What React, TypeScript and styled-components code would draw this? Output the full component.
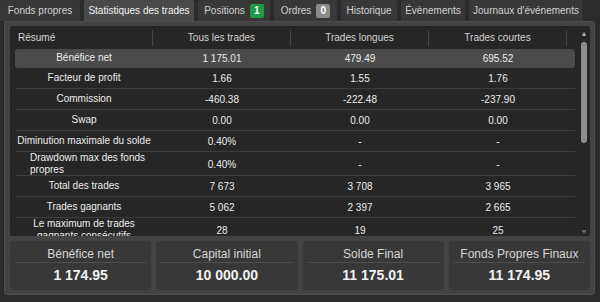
import React from "react";
import styled, { createGlobalStyle } from "styled-components";

const Global = createGlobalStyle`
  html, body { margin: 0; padding: 0; background: #2b2b2b; }
  body { font-family: "Liberation Sans", Arial, sans-serif; }
`;

const Root = styled.div`
  width: 600px;
  height: 302px;
  background: #2b2b2b;
  color: #e6e6e6;
  font-family: "Liberation Sans", Arial, sans-serif;
  overflow: hidden;
`;

const TabBar = styled.div`
  display: flex;
  gap: 4px;
  height: 21px;
`;

const Tab = styled.div<{ $w: number; $active?: boolean }>`
  width: ${(p) => p.$w}px;
  height: 21px;
  box-sizing: border-box;
  display: flex;
  align-items: center;
  justify-content: center;
  gap: 5px;
  font-size: 10px;
  color: ${(p) => (p.$active ? "#f0f0f0" : "#d0d0d0")};
  background: ${(p) => (p.$active ? "#4a4a4a" : "#383838")};
  border-radius: 2px 2px 0 0;
  white-space: nowrap;
`;

const Badge = styled.span<{ $green?: boolean }>`
  display: inline-flex;
  align-items: center;
  justify-content: center;
  width: 14px;
  height: 14px;
  border-radius: 2px;
  font-size: 10px;
  font-weight: bold;
  color: #fff;
  background: ${(p) => (p.$green ? "#1f9a45" : "#8a8a8a")};
`;

const Panel = styled.div`
  margin: 0 5px 0 4px;
  height: 274px;
  box-sizing: border-box;
  background: #434343;
  border: 1px solid #4d4d4d;
  border-radius: 0 3px 3px 3px;
  padding: 4px 4px 4px 5px;
  display: flex;
  flex-direction: column;
  gap: 5px;
`;

const TableArea = styled.div`
  height: 210px;
  background: #262626;
  border-radius: 2px;
  display: flex;
  padding-left: 5px;
  overflow: hidden;
`;

const TableMain = styled.div`
  width: 560px;
  display: flex;
  flex-direction: column;
`;

const HeaderRow = styled.div`
  display: grid;
  grid-template-columns: 138px 138px 138px 138px 8px;
  height: 23px;
  align-items: center;
  font-size: 10px;
  color: #d2d2d2;
`;

const HeadCell = styled.div<{ $left?: boolean }>`
  height: 16px;
  display: flex;
  align-items: center;
  justify-content: ${(p) => (p.$left ? "flex-start" : "center")};
  padding-left: ${(p) => (p.$left ? "3px" : "0")};
  border-right: 1px solid #454545;
`;

const Body = styled.div`
  flex: 1;
  overflow: hidden;
`;

const Row = styled.div<{ $hl?: boolean; $tall?: boolean }>`
  display: grid;
  grid-template-columns: 138px 138px 138px 138px 8px;
  align-items: center;
  height: ${(p) => (p.$hl ? 18 : p.$tall ? 23 : 20)}px;
  font-size: 10px;
  color: #ececec;
  background: ${(p) => (p.$hl ? "#4b4b4b" : "transparent")};
  border-radius: ${(p) => (p.$hl ? "3px" : "0")};
  border-bottom: 1px solid ${(p) => (p.$hl ? "transparent" : "#3d3d3d")};
`;

const LabelCell = styled.div<{ $left?: boolean }>`
  text-align: ${(p) => (p.$left ? "left" : "center")};
  padding: ${(p) => (p.$left ? "0 4px 0 15px" : "0 2px")};
  line-height: 12px;
`;

const ValueCell = styled.div`
  text-align: center;
`;

const ScrollBar = styled.div`
  width: 14px;
  margin-left: 3px;
  display: flex;
  flex-direction: column;
  align-items: center;
  padding-top: 4px;
  box-sizing: border-box;
`;

const Arrow = styled.div<{ $dark?: boolean }>`
  font-size: 7px;
  line-height: 8px;
  height: 8px;
  color: ${(p) => (p.$dark ? "#6f6f6f" : "#b5b5b5")};
`;

const Thumb = styled.div`
  width: 6px;
  height: 101px;
  margin-top: 4px;
  background: #8e8e8e;
  border-radius: 3px;
`;

const Spacer = styled.div`
  flex: 1;
`;

const CardRow = styled.div`
  display: flex;
  gap: 5px;
  height: 49px;
`;

const Card = styled.div`
  flex: 1;
  background: #383838;
  border-radius: 3px;
  display: flex;
  flex-direction: column;
  align-items: stretch;
  padding: 0 5px;
`;

const CardLabel = styled.div`
  height: 20px;
  display: flex;
  align-items: flex-end;
  justify-content: center;
  font-size: 12px;
  color: #d6d6d6;
  border-bottom: 1px solid #4e4e4e;
  padding-bottom: 1px;
`;

const CardValue = styled.div`
  flex: 1;
  display: flex;
  align-items: center;
  justify-content: center;
  font-size: 14px;
  font-weight: bold;
  color: #f2f2f2;
  padding-bottom: 3px;
`;

const rows: { label: string; v: [string, string, string]; hl?: boolean; tall?: boolean; left?: boolean }[] = [
  { label: "Bénéfice net", v: ["1 175.01", "479.49", "695.52"], hl: true },
  { label: "Facteur de profit", v: ["1.66", "1.55", "1.76"] },
  { label: "Commission", v: ["-460.38", "-222.48", "-237.90"] },
  { label: "Swap", v: ["0.00", "0.00", "0.00"] },
  { label: "Diminution maximale du solde", v: ["0.40%", "-", "-"] },
  { label: "Drawdown max des fonds propres", v: ["0.40%", "-", "-"], tall: true, left: true },
  { label: "Total des trades", v: ["7 673", "3 708", "3 965"] },
  { label: "Trades gagnants", v: ["5 062", "2 397", "2 665"] },
  { label: "Le maximum de trades gagnants consécutifs", v: ["28", "19", "25"], tall: true },
];

const cards = [
  ["Bénéfice net", "1 174.95"],
  ["Capital initial", "10 000.00"],
  ["Solde Final", "11 175.01"],
  ["Fonds Propres Finaux", "11 174.95"],
];

export default function App() {
  return (
    <Root>
      <Global />
      <TabBar>
        <Tab $w={80}>Fonds propres</Tab>
        <Tab $w={110} $active>Statistiques des trades</Tab>
        <Tab $w={72}>
          Positions <Badge $green>1</Badge>
        </Tab>
        <Tab $w={63}>
          Ordres <Badge>0</Badge>
        </Tab>
        <Tab $w={56}>Historique</Tab>
        <Tab $w={64}>Évènements</Tab>
        <Tab $w={114}>Journaux d'événements</Tab>
      </TabBar>
      <Panel>
        <TableArea>
          <TableMain>
            <HeaderRow>
              <HeadCell $left>Résumé</HeadCell>
              <HeadCell>Tous les trades</HeadCell>
              <HeadCell>Trades longues</HeadCell>
              <HeadCell>Trades courtes</HeadCell>
            </HeaderRow>
            <Body>
              {rows.map((r) => (
                <Row key={r.label} $hl={r.hl} $tall={r.tall}>
                  <LabelCell $left={r.left}>{r.label}</LabelCell>
                  <ValueCell>{r.v[0]}</ValueCell>
                  <ValueCell>{r.v[1]}</ValueCell>
                  <ValueCell>{r.v[2]}</ValueCell>
                </Row>
              ))}
            </Body>
          </TableMain>
          <ScrollBar>
            <Arrow>▲</Arrow>
            <Thumb />
            <Spacer />
            <Arrow $dark>▼</Arrow>
          </ScrollBar>
        </TableArea>
        <CardRow>
          {cards.map(([l, v]) => (
            <Card key={l}>
              <CardLabel>{l}</CardLabel>
              <CardValue>{v}</CardValue>
            </Card>
          ))}
        </CardRow>
      </Panel>
    </Root>
  );
}
